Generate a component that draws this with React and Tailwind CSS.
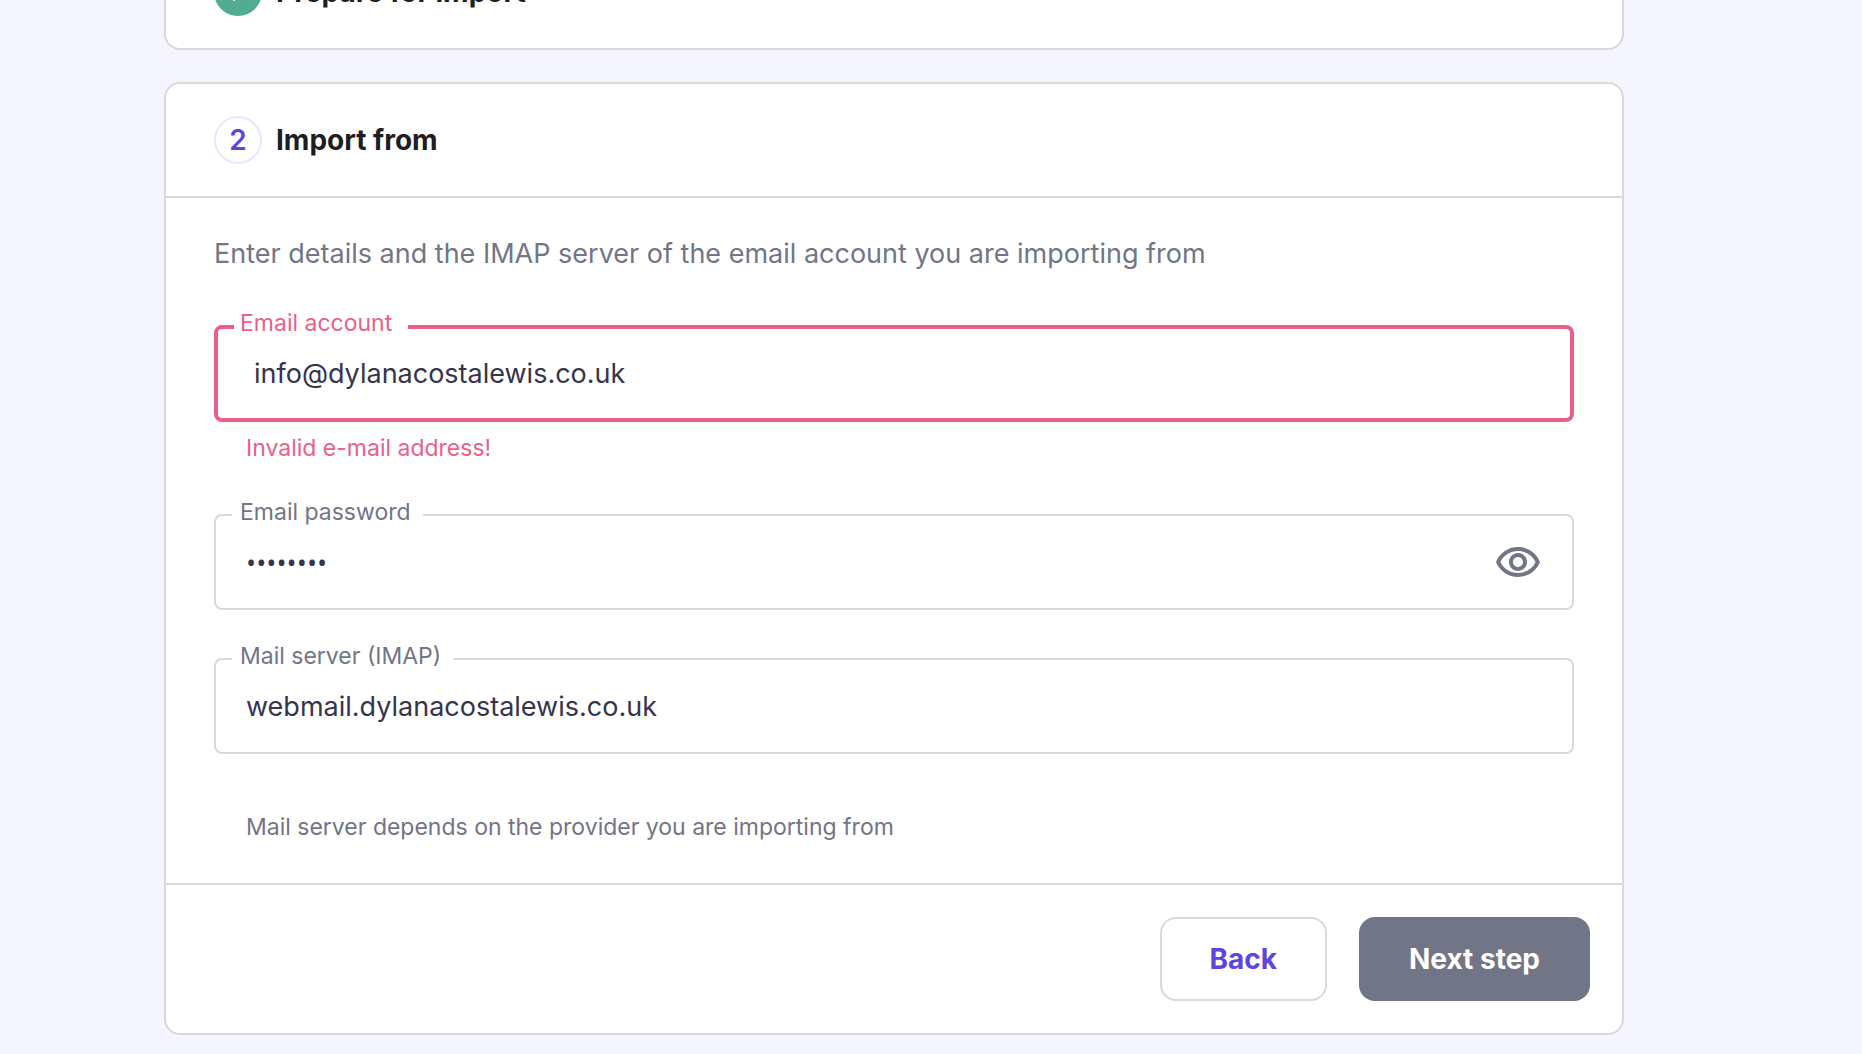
import { useState } from "react";

function EyeIcon() {
  return (
    <svg viewBox="0 -0.5 24 24" className="size-12" fill="currentColor" aria-hidden="true">
      <path d="M12 6c3.79 0 7.17 2.13 8.82 5.5C19.17 14.87 15.79 17 12 17s-7.17-2.13-8.82-5.5C4.83 8.13 8.21 6 12 6m0-2C7 4 2.73 7.11 1 11.5 2.73 15.89 7 19 12 19s9.27-3.11 11-7.5C21.27 7.11 17 4 12 4m0 5c1.38 0 2.5 1.12 2.5 2.5S13.38 14 12 14s-2.5-1.12-2.5-2.5S10.62 9 12 9m0-2c-2.48 0-4.5 2.02-4.5 4.5S9.52 16 12 16s4.5-2.02 4.5-4.5S14.48 7 12 7" />
    </svg>
  );
}

function CheckIcon() {
  return (
    <svg viewBox="0 0 24 24" className="size-8" fill="currentColor" aria-hidden="true">
      <path d="M9 16.17 4.83 12l-1.42 1.41L9 19 21 7l-1.41-1.41z" />
    </svg>
  );
}

function Field({ id, label, type = "text", defaultValue, error, children }) {
  const box = error
    ? "h-[97px] border-4 border-[#eb5f87] pl-9"
    : "h-24 border-2 border-[#d9d9d9] pl-[30px]";
  const font = type === "password" ? "font-['Open_Sans',sans-serif] pr-24" : "pr-8";
  return (
    <div className="relative">
      <input
        id={id}
        type={type}
        defaultValue={defaultValue}
        aria-invalid={error ? true : undefined}
        className={`block w-full rounded-lg bg-white text-[27px] text-[#36344d] outline-none ${box} ${font}`}
      />
      <label
        htmlFor={id}
        className={`absolute -top-4 bg-white text-[23px] leading-7 ${error ? "left-5 pr-4 pl-1.5 text-[#eb5f87]" : "left-[18px] pr-3 pl-2 text-[#727586]"}`}
      >
        {label}
      </label>
      {children}
    </div>
  );
}

export default function App() {
  const [visible, setVisible] = useState(false);
  return (
    <main className="min-h-screen overflow-hidden bg-[#f4f5ff] pr-[238px] pl-[164px] font-['Inter',sans-serif]">
      <section className="-mt-[66px] rounded-2xl border-2 border-[#d9d9d9] bg-white">
        <header className="flex items-center gap-[14px] px-12 py-8">
          <span className="flex size-12 items-center justify-center rounded-full bg-[#50ad93] text-white">
            <CheckIcon />
          </span>
          <h2 className="text-[28px] leading-9 font-bold text-[#1d1e20]">Prepare for import</h2>
        </header>
      </section>

      <section className="mt-8 rounded-2xl border-2 border-[#d9d9d9] bg-white">
        <header className="flex items-center gap-[14px] border-b-2 border-[#d9d9d9] px-12 py-8">
          <span className="flex size-12 items-center justify-center rounded-full border-2 border-[#ebe4ff] text-[28px] font-semibold text-[#5f45dd]">
            2
          </span>
          <h2 className="text-[28px] leading-9 font-bold text-[#1d1e20]">Import from</h2>
        </header>

        <form>
          <div className="px-12 pt-[38px] pb-[42px]">
            <p className="text-[27px] leading-9 text-[#727586]">
              Enter details and the IMAP server of the email account you are importing from
            </p>
            <div className="mt-[53px]">
              <Field id="email" label="Email account" defaultValue="info@dylanacostalewis.co.uk" error />
              <p className="mt-3 pl-8 text-[23px] leading-7 text-[#eb5f87]">Invalid e-mail address!</p>
            </div>
            <div className="mt-[52px]">
              <Field id="password" label="Email password" type={visible ? "text" : "password"} defaultValue="password">
                <button
                  type="button"
                  aria-label="Show password"
                  onClick={() => setVisible(!visible)}
                  className="absolute inset-y-0 right-8 flex items-center text-[#727586]"
                >
                  <EyeIcon />
                </button>
              </Field>
            </div>
            <div className="mt-12">
              <Field id="server" label="Mail server (IMAP)" defaultValue="webmail.dylanacostalewis.co.uk" />
              <p className="mt-[59px] pl-8 text-[23px] leading-7 text-[#727586]">
                Mail server depends on the provider you are importing from
              </p>
            </div>
          </div>

          <footer className="flex justify-end gap-8 border-t-2 border-[#d9d9d9] p-8">
            <button
              type="button"
              className="h-[84px] rounded-2xl border-2 border-[#d9d9d9] bg-white px-12 text-[28px] font-bold text-[#5f45dd]"
            >
              Back
            </button>
            <button type="button" className="h-[84px] rounded-2xl bg-[#727586] px-[50px] text-[28px] font-bold text-white">
              Next step
            </button>
          </footer>
        </form>
      </section>
    </main>
  );
}
